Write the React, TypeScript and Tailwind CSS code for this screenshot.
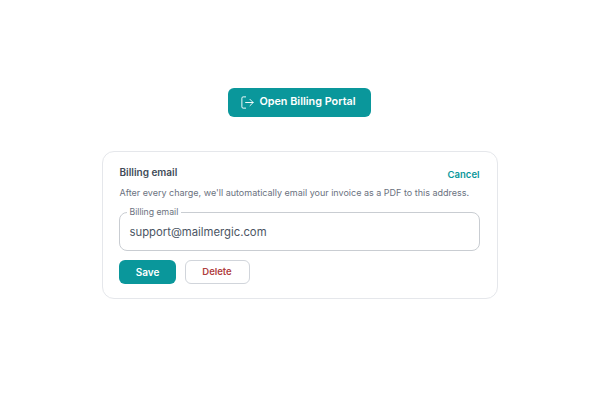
import { LogOut } from "lucide-react";

export default function App() {
  return (
    <div className="w-[600px] h-[400px] bg-white flex flex-col items-center pt-[88px] font-['Inter',sans-serif]">
      <button className="mr-[1px] w-[143px] h-[29px] pr-[3px] rounded-md bg-[#0a979b] text-white flex items-center justify-center gap-[4px] text-[10.8px] font-semibold">
        <LogOut className="w-[15px] h-[15px]" strokeWidth={1.5} />
        Open Billing Portal
      </button>

      <div className="mt-[34px] mr-[1px] w-[396px] h-[148px] rounded-xl border border-[#e5e7eb] pl-[16px] pr-[17px] pt-[12px]">
        <div className="flex items-center justify-between h-[16px] pl-[1px]">
          <h2 className="text-[10px] font-semibold text-[#414b58]">Billing email</h2>
          <button className="text-[9.5px] font-semibold text-[#0a979b] mt-[6px]">Cancel</button>
        </div>
        <p className="mt-[6px] pl-[1px] text-[9px] leading-[14px] text-[#6b7280] whitespace-nowrap">
          After every charge, we'll automatically email your invoice as a PDF to this address.
        </p>
        <fieldset className="mt-[7px] h-[44px] rounded-lg border border-[#c9cdd2] pl-[7px] pr-[6px]">
          <legend className="px-[3px] text-[8.7px] leading-[11px] text-[#6b7280]">Billing email</legend>
          <div className="px-[3px] pt-[3px] text-[11.3px] leading-[22px] text-[#4b5563]">support@mailmergic.com</div>
        </fieldset>
        <div className="mt-[9px] flex gap-[9px]">
          <button className="w-[57px] h-[24px] pl-[1px] rounded-md bg-[#0a979b] text-white text-[10px] font-semibold">Save</button>
          <button className="w-[65px] h-[24px] rounded-md border border-[#d1d5db] bg-white text-[#b0403f] text-[9.5px] font-semibold">Delete</button>
        </div>
      </div>
    </div>
  );
}
